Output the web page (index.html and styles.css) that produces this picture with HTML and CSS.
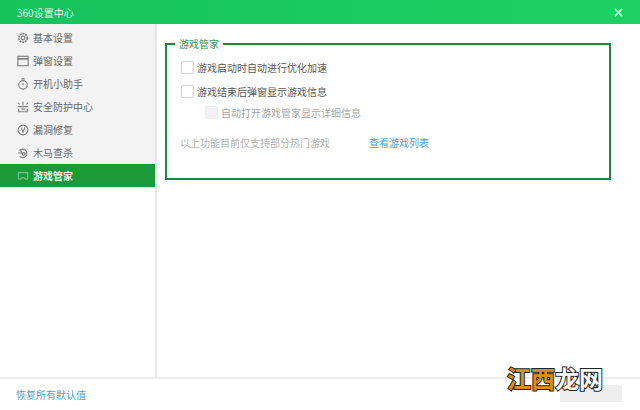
FILE: index.html
```html
<!DOCTYPE html>
<html lang="zh">
<head>
<meta charset="utf-8">
<title>360设置中心</title>
<link rel="stylesheet" href="styles.css">
</head>
<body>
<div class="window">
  <header class="titlebar">
    <span class="title">360设置中心</span>
    <svg class="close" width="9" height="9" viewBox="0 0 10 10"><path d="M1 1l8 8M9 1l-8 8" stroke="#d8f5e2" stroke-width="1.800" fill="none"/></svg>
  </header>
  <div class="main">
    <nav class="sidebar">
      <div class="item">
        <svg class="icon" viewBox="0 0 14 14"><circle cx="7" cy="7" r="2.200"/><circle cx="7" cy="7" r="5" stroke-dasharray="2.200 1" stroke-width="2"/></svg>
        <span>基本设置</span>
      </div>
      <div class="item">
        <svg class="icon" viewBox="0 0 14 14"><rect x="1" y="1.500" width="12" height="11"/><path d="M1 4.500h12" stroke-width="2"/></svg>
        <span>弹窗设置</span>
      </div>
      <div class="item">
        <svg class="icon" viewBox="0 0 14 14"><circle cx="7" cy="8" r="5"/><path d="M5 1h4M7 6v2.500"/></svg>
        <span>开机小助手</span>
      </div>
      <div class="item">
        <svg class="icon" viewBox="0 0 14 14"><path d="M1 2l2 2M13 2l-2 2M7 1v4M1 6.500h12M2 9v3M12 9v3M1 12.500h12M5 9.500h4"/></svg>
        <span>安全防护中心</span>
      </div>
      <div class="item">
        <svg class="icon" viewBox="0 0 14 14"><circle cx="7" cy="7" r="5.700"/><path d="M5 4.500l2 5 2-5"/></svg>
        <span>漏洞修复</span>
      </div>
      <div class="item">
        <svg class="icon" viewBox="0 0 14 14"><path d="M3 4a5 5 0 1 1 0 7"/><path d="M1 7h5l-2-3"/><circle cx="8" cy="8" r="1.500"/></svg>
        <span>木马查杀</span>
      </div>
      <div class="item active">
        <svg class="icon" viewBox="0 0 14 14"><path d="M1.500 3h11v7.500h-3l-1-1.500h-3l-1 1.500h-3z"/></svg>
        <span>游戏管家</span>
      </div>
    </nav>
    <section class="content">
      <fieldset class="group">
        <legend class="legend">游戏管家</legend>
        <div class="option first">
          <span class="check"></span>
          <span>游戏启动时自动进行优化加速</span>
        </div>
        <div class="option second">
          <span class="check"></span>
          <span>游戏结束后弹窗显示游戏信息</span>
        </div>
        <div class="option sub">
          <span class="check disabled"></span>
          <span>自动打开游戏管家显示详细信息</span>
        </div>
        <div class="note">
          <span>以上功能目前仅支持部分热门游戏</span>
          <span class="link">查看游戏列表</span>
        </div>
      </fieldset>
    </section>
  </div>
  <footer class="footer">
    <span class="restore">恢复所有默认值</span>
  </footer>
  <div class="stamp"></div>
  <div class="watermark">
    <span class="wm-orange">江西</span><span class="wm-white">龙网</span>
  </div>
</div>
</body>
</html>
```

FILE: styles.css
```css
* { box-sizing: border-box; }
html, body { margin: 0; padding: 0; }
body {
  width: 640px;
  height: 410px;
  overflow: hidden;
  background: #fff;
  font-family: "Noto Sans CJK SC", "Liberation Sans", sans-serif;
  font-size: 10px;
  color: #555;
}
.window {
  position: relative;
  width: 640px;
  height: 410px;
  display: flex;
  flex-direction: column;
}
.titlebar {
  height: 24px;
  flex: none;
  display: flex;
  align-items: center;
  justify-content: space-between;
  padding: 0 17px;
  background: linear-gradient(90deg, #16c25c, #1fd063);
  color: #dff7e8;
}
.main {
  flex: 1;
  display: flex;
  min-height: 0;
}
.sidebar {
  width: 157px;
  flex: none;
  padding-top: 2px;
  background: linear-gradient(180deg, #f3f3f3 0, #f3f3f3 140px, #fff 140px);
  border-right: 2px solid #e8e8e8;
  display: flex;
  flex-direction: column;
}
.item {
  height: 23px;
  flex: none;
  display: flex;
  align-items: center;
  gap: 4px;
  padding-left: 17px;
  color: #666;
}
.item.active {
  background: #1c9a3a;
  color: #e6f7ea;
  font-weight: 700;
}
.icon {
  width: 12px;
  height: 12px;
  flex: none;
  fill: none;
  stroke: #7e7e7e;
  stroke-width: 1.300;
}
.active .icon { stroke: #7cc48c; }
.content {
  flex: 1;
  padding: 13px 29px 0 8px;
  min-width: 0;
}
.group {
  margin: 0;
  height: 143px;
  border: 2px solid #1a8a42;
  padding: 5px 0 0 14px;
  min-width: 0;
}
.legend {
  margin-left: -6px;
  padding: 0 4px;
  color: #3d8a4a;
  line-height: 14px;
}
.option {
  display: flex;
  align-items: center;
  gap: 3px;
  height: 14px;
  color: #555;
}
.first { margin-top: 4px; }
.second { margin-top: 10px; }
.sub {
  margin-top: 7px;
  padding-left: 24px;
  color: #a6a6a6;
}
.check {
  width: 13px;
  height: 13px;
  flex: none;
  background: #fff;
  border: 1px solid #d2d2d2;
  border-radius: 2px;
}
.check.disabled {
  background: #f1f1f1;
  border-color: #ececec;
}
.note {
  margin-top: 17px;
  display: flex;
  gap: 39px;
  margin-left: -1px;
  color: #b0b0b0;
  line-height: 14px;
}
.link { color: #4a9fd6; }
.footer {
  height: 33px;
  flex: none;
  border-top: 2px solid #ededed;
  display: flex;
  align-items: center;
  padding: 0 0 0 16px;
}
.restore { color: #4a9fd6; }
.stamp {
  position: absolute;
  left: 560px;
  top: 385px;
  width: 62px;
  height: 17px;
  background: #eeeeee;
}
.watermark {
  position: absolute;
  left: 507px;
  top: 365px;
  font-size: 24px;
  line-height: 26px;
  font-weight: 700;
  white-space: nowrap;
  paint-order: stroke fill;
  -webkit-text-stroke: 2px #222;
}
.wm-orange { color: #d98f1e; }
.wm-white { color: #fff; }
```
